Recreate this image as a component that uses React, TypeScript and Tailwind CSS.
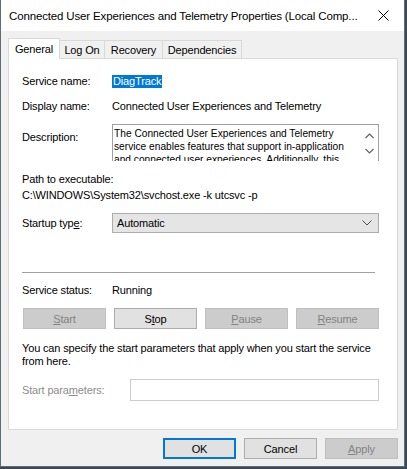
import React from "react";

const ui = "font-['Segoe_UI','Liberation_Sans',Arial,sans-serif] tracking-[-0.15px]";

function Tab({ label, active = false, w }: { label: string; active?: boolean; w: string }) {
  if (active) {
    return (
      <div
        className={`relative z-10 -mb-px flex h-[21px] ${w} items-start justify-center border border-b-0 border-[#d9d9d9] bg-white pt-[2px] text-[11px] leading-[16px] text-black`}
      >
        {label}
      </div>
    );
  }
  return (
    <div
      className={`-ml-px flex h-[18px] ${w} items-center justify-center border border-b-0 border-[#d9d9d9] bg-[#f0f0f0] pt-[1px] text-[11px] leading-[16px] text-black first:ml-0`}
    >
      {label}
    </div>
  );
}

function Btn({
  children,
  disabled = false,
  primary = false,
  className = "",
}: {
  children: React.ReactNode;
  disabled?: boolean;
  primary?: boolean;
  className?: string;
}) {
  const tone = disabled
    ? "border border-[#bfbfbf] bg-[#cccccc] text-[#838383]"
    : primary
      ? "border-2 border-[#0078d7] bg-[#e1e1e1] text-black"
      : "border border-[#adadad] bg-[#e1e1e1] text-black";
  return (
    <div className={`flex h-[21px] items-center justify-center text-[11px] leading-[16px] ${tone} ${className}`}>
      {children}
    </div>
  );
}

export default function App() {
  return (
    <div className={`h-[469px] w-[407px] bg-[#3c4a57] ${ui}`}>
      <div className="flex h-[467px] w-[405px] flex-col border-x border-b border-[#5f6b75] bg-[#f0f0f0]">
        {/* title bar */}
        <div className="flex h-[31px] items-center bg-white pl-[8px] pr-[14px]">
          <span className="flex-1 whitespace-nowrap text-[11.5px] leading-[16px] text-black">
            Connected User Experiences and Telemetry Properties (Local Comp...
          </span>
          <svg width="11" height="11" viewBox="0 0 11 11" className="mr-[1px]">
            <path d="M0.5 0.5 L10.5 10.5 M10.5 0.5 L0.5 10.5" stroke="#000" strokeWidth="1" />
          </svg>
        </div>

        <div className="flex flex-1 flex-col pl-[7px] pr-[6px] pt-[7px]">
          {/* tabs */}
          <div className="flex h-[20px] items-end">
            <Tab label="General" active w="w-[52px]" />
            <Tab label="Log On" w="w-[46px]" />
            <Tab label="Recovery" w="w-[59px]" />
            <Tab label="Dependencies" w="w-[80px]" />
          </div>

          {/* panel */}
          <div className="flex h-[372px] w-[390px] flex-col border border-[#d9d9d9] bg-white pl-[13px] text-[11px] leading-[16px] text-black">
            <div className="mt-[14px] flex h-[16px] items-center">
              <span className="w-[90px]">Service name:</span>
              <span className="bg-[#0078d7] px-[1px] leading-[13px] text-white">DiagTrack</span>
            </div>

            <div className="mt-[9px] flex h-[16px] items-center">
              <span className="w-[90px]">Display name:</span>
              <span>Connected User Experiences and Telemetry</span>
            </div>

            <div className="mt-[10px] flex">
              <span className="w-[90px] pt-[5px]">Description:</span>
              <div className="relative h-[37px] w-[267px] overflow-hidden whitespace-nowrap border-x border-t border-[#a0a0a0] pl-[1px] pt-[2px] font-['Liberation_Sans',Arial,sans-serif] text-[10.2px] leading-[13px] tracking-normal">
                The Connected User Experiences and Telemetry
                <br />
                service enables features that support in-application
                <br />
                and connected user experiences. Additionally, this
                <div className="absolute right-[4px] top-[8px] flex flex-col gap-[9px]">
                  <svg width="9" height="6" viewBox="0 0 9 6">
                    <path d="M0.5 5 L4.5 1 L8.5 5" fill="none" stroke="#606060" strokeWidth="1.2" />
                  </svg>
                  <svg width="9" height="6" viewBox="0 0 9 6">
                    <path d="M0.5 1 L4.5 5 L8.5 1" fill="none" stroke="#606060" strokeWidth="1.2" />
                  </svg>
                </div>
              </div>
            </div>

            <div className="mt-[10px] h-[16px]">Path to executable:</div>
            <div className="h-[16px]">C:\WINDOWS\System32\svchost.exe -k utcsvc -p</div>

            <div className="mt-[10px] flex items-center">
              <span className="w-[90px]">
                Startup typ<span className="underline">e</span>:
              </span>
              <div className="flex h-[20px] w-[267px] items-center justify-between border border-[#adadad] bg-[#e5e5e5] pl-[4px] pr-[6px]">
                <span>Automatic</span>
                <svg width="10" height="6" viewBox="0 0 10 6">
                  <path d="M0.5 0.5 L5 5 L9.5 0.5" fill="none" stroke="#505050" strokeWidth="1" />
                </svg>
              </div>
            </div>

            <div className="mt-[39px] h-px w-[353px] bg-[#a0a0a0]" />

            <div className="mt-[9px] flex h-[16px] items-center">
              <span className="w-[90px]">Service status:</span>
              <span>Running</span>
            </div>

            <div className="ml-px mt-[10px] grid w-[356px] grid-cols-4 gap-[8px]">
              <Btn disabled>
                <span className="underline">S</span>tart
              </Btn>
              <Btn>
                S<span className="underline">t</span>op
              </Btn>
              <Btn disabled>
                <span className="underline">P</span>ause
              </Btn>
              <Btn disabled>
                <span className="underline">R</span>esume
              </Btn>
            </div>

            <p className="mt-[13px] whitespace-nowrap leading-[13px]">
              You can specify the start parameters that apply when you start the service
              <br />
              from here.
            </p>

            <div className="mt-[11px] flex items-center">
              <span className="w-[108px] text-[#8c8c8c]">
                Start para<span className="underline">m</span>eters:
              </span>
              <div className="h-[22px] w-[249px] border border-[#cccccc] bg-white" />
            </div>
          </div>

          {/* dialog buttons */}
          <div className="mt-[8px] flex justify-end gap-[8px]">
            <Btn primary className="w-[73px]">
              OK
            </Btn>
            <Btn className="w-[73px]">Cancel</Btn>
            <Btn disabled className="w-[73px]">
              <span className="underline">A</span>pply
            </Btn>
          </div>
        </div>
      </div>
    </div>
  );
}
